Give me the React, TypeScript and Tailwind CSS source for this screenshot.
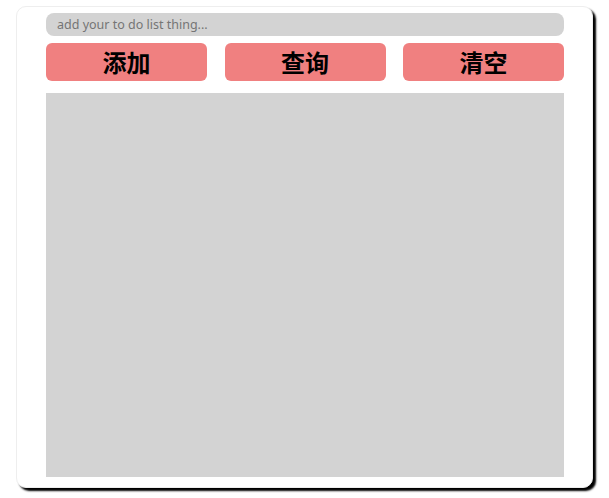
import React from 'react';

const App: React.FC = () => {
  const buttons = ['添加', '查询', '清空'];
  return (
    <div className="min-h-screen bg-white pt-[6px] pl-[16px]">
      {/* Card */}
      <div className="w-[577px] h-[482px] bg-white border border-[#eee] rounded-[10px] shadow-[3px_3px_2px_#000] pl-[29px] pr-[28px] pt-[6px]">
        <input
          type="text"
          placeholder="add your to do list thing..."
          className="block w-full h-[23px] rounded-[8px] bg-[#d3d3d3] pl-[11px] text-[12.5px] text-black placeholder:text-[#757575] outline-none font-['Noto_Sans',sans-serif]"
        />
        <div className="mt-[7px] flex justify-between">
          {buttons.map((label) => (
            <button
              key={label}
              className="w-[161px] h-[38px] rounded-[6px] bg-[#f08080] text-black text-[24px] font-bold leading-none font-['Noto_Sans_CJK_SC',sans-serif]"
            >
              {label}
            </button>
          ))}
        </div>
        <div className="mt-[12px] h-[384px] bg-[#d3d3d3]" />
      </div>
    </div>
  );
};

export default App;
